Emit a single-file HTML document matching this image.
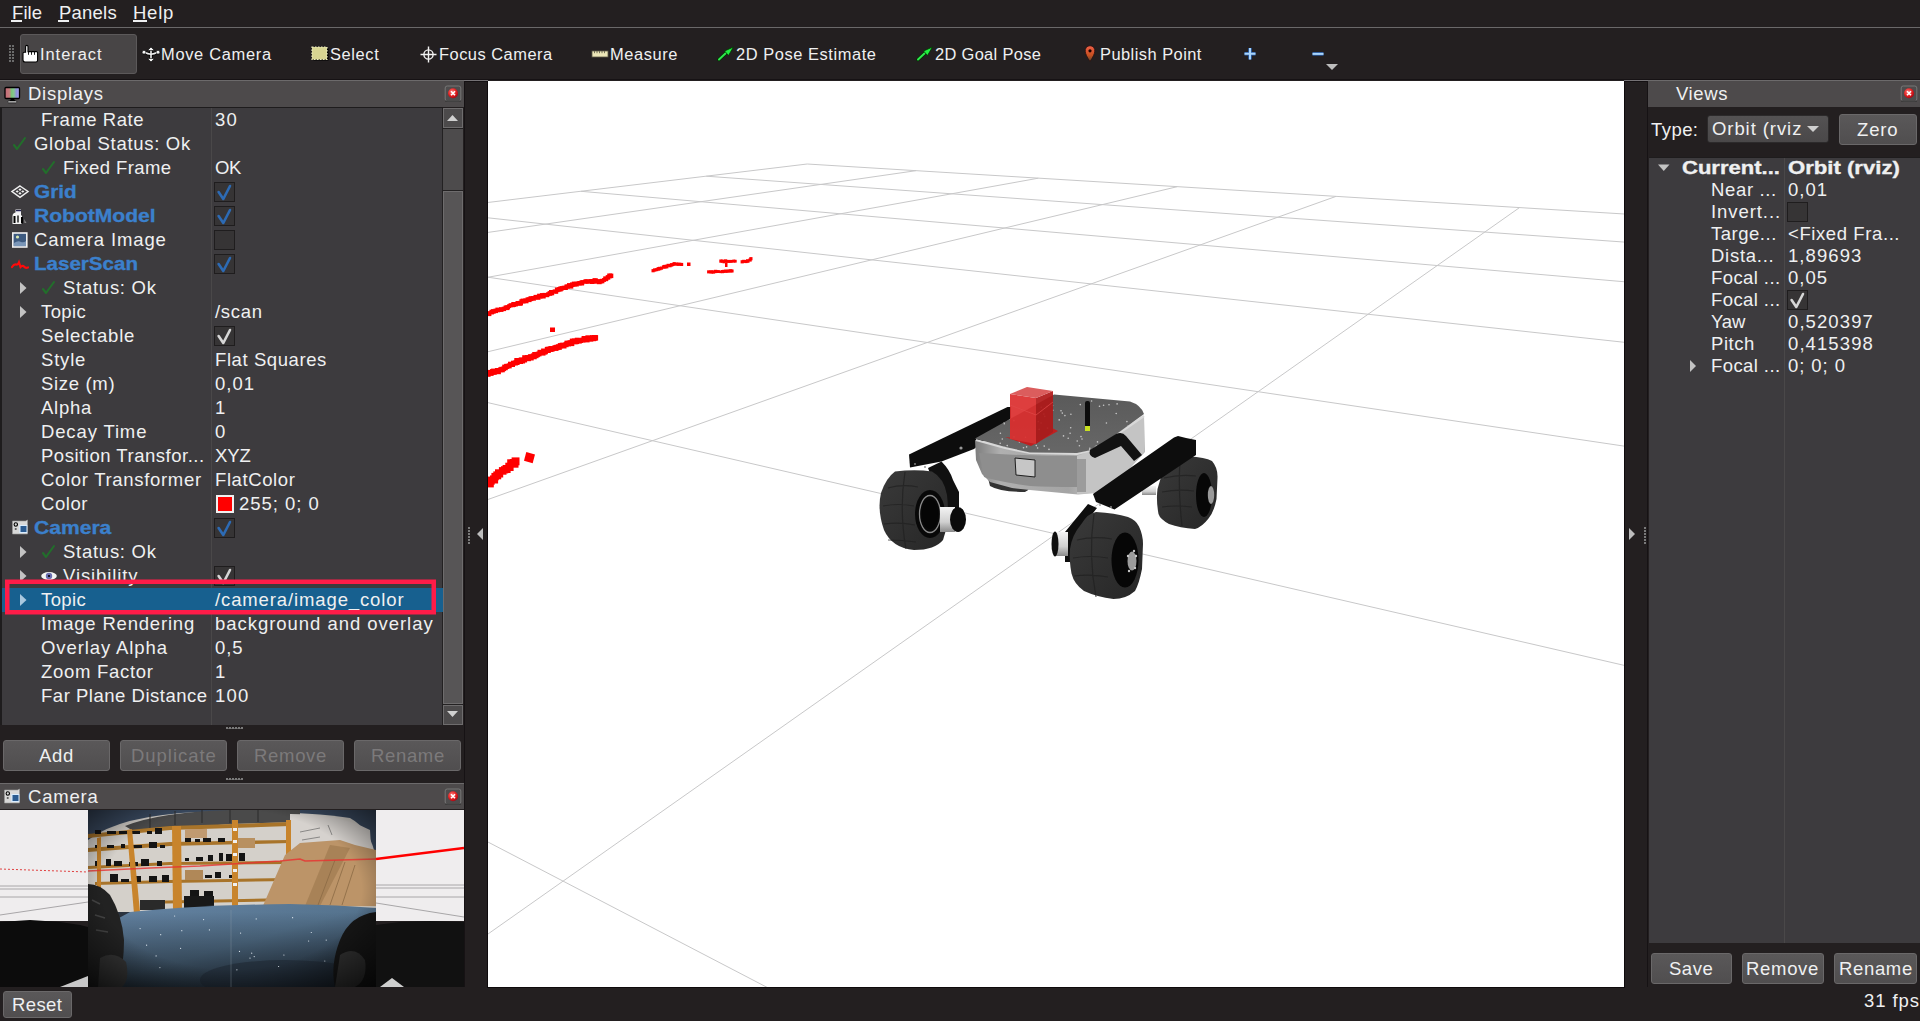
<!DOCTYPE html><html><head><meta charset="utf-8"><style>
html,body{margin:0;padding:0;}
body{width:1920px;height:1021px;position:relative;overflow:hidden;background:#231f20;font-family:"Liberation Sans",sans-serif;}
.t{position:absolute;white-space:pre;line-height:20px;font-family:"Liberation Sans",sans-serif;}
svg{position:absolute;}
</style></head><body>
<div style="position:absolute;left:0px;top:27px;width:1920px;height:1px;background:#6a6869;"></div>
<div class="t" style="left:12px;top:3.0px;color:#eff0f1;font-size:18.5px;letter-spacing:0.079px;">File</div>
<div class="t" style="left:59px;top:3.0px;color:#eff0f1;font-size:18.5px;letter-spacing:0.229px;">Panels</div>
<div class="t" style="left:133px;top:3.0px;color:#eff0f1;font-size:18.5px;letter-spacing:0.746px;">Help</div>
<div style="position:absolute;left:11px;top:20px;width:11px;height:1.5px;background:#eff0f1;"></div>
<div style="position:absolute;left:58px;top:20px;width:11px;height:1.5px;background:#eff0f1;"></div>
<div style="position:absolute;left:133px;top:20px;width:14px;height:1.5px;background:#eff0f1;"></div>
<div style="position:absolute;left:20px;top:34px;width:117px;height:40px;background:#484546;box-sizing:border-box;border:1px solid #5c595a;border-radius:3px;"></div>
<div style="position:absolute;left:9px;top:45px;width:2px;height:2px;background:#6b6b6b;"></div>
<div style="position:absolute;left:12px;top:45px;width:2px;height:2px;background:#6b6b6b;"></div>
<div style="position:absolute;left:9px;top:48px;width:2px;height:2px;background:#6b6b6b;"></div>
<div style="position:absolute;left:12px;top:48px;width:2px;height:2px;background:#6b6b6b;"></div>
<div style="position:absolute;left:9px;top:51px;width:2px;height:2px;background:#6b6b6b;"></div>
<div style="position:absolute;left:12px;top:51px;width:2px;height:2px;background:#6b6b6b;"></div>
<div style="position:absolute;left:9px;top:54px;width:2px;height:2px;background:#6b6b6b;"></div>
<div style="position:absolute;left:12px;top:54px;width:2px;height:2px;background:#6b6b6b;"></div>
<div style="position:absolute;left:9px;top:57px;width:2px;height:2px;background:#6b6b6b;"></div>
<div style="position:absolute;left:12px;top:57px;width:2px;height:2px;background:#6b6b6b;"></div>
<div style="position:absolute;left:9px;top:60px;width:2px;height:2px;background:#6b6b6b;"></div>
<div style="position:absolute;left:12px;top:60px;width:2px;height:2px;background:#6b6b6b;"></div>
<div class="t" style="left:40px;top:44.3px;color:#eff0f1;font-size:16.444444444444443px;letter-spacing:0.952px;">Interact</div>
<div class="t" style="left:161px;top:44.3px;color:#eff0f1;font-size:16.444444444444443px;letter-spacing:0.688px;">Move Camera</div>
<div class="t" style="left:330px;top:44.3px;color:#eff0f1;font-size:16.444444444444443px;letter-spacing:0.612px;">Select</div>
<div class="t" style="left:439px;top:44.3px;color:#eff0f1;font-size:16.444444444444443px;letter-spacing:0.483px;">Focus Camera</div>
<div class="t" style="left:610px;top:44.3px;color:#eff0f1;font-size:16.444444444444443px;letter-spacing:0.580px;">Measure</div>
<div class="t" style="left:736px;top:44.3px;color:#eff0f1;font-size:16.444444444444443px;letter-spacing:0.556px;">2D Pose Estimate</div>
<div class="t" style="left:935px;top:44.3px;color:#eff0f1;font-size:16.444444444444443px;letter-spacing:0.323px;">2D Goal Pose</div>
<div class="t" style="left:1100px;top:44.3px;color:#eff0f1;font-size:16.444444444444443px;letter-spacing:0.457px;">Publish Point</div>
<div style="position:absolute;left:0px;top:80px;width:464px;height:27px;background:#4d4a4b;box-sizing:border-box;border-top:1px solid #6c6a6b;"></div>
<div class="t" style="left:28px;top:84.0px;color:#eff0f1;font-size:18.5px;letter-spacing:0.726px;">Displays</div>
<div style="position:absolute;left:0px;top:107px;width:443px;height:618px;background:#3d3b3e;box-sizing:border-box;border-left:2px solid #1e1c1d;border-top:1px solid #1e1c1d;"></div>
<div style="position:absolute;left:211px;top:108px;width:1px;height:617px;background:#4a4849;"></div>
<div style="position:absolute;left:442px;top:108px;width:21px;height:617px;background:#232122;"></div>
<div style="position:absolute;left:443px;top:129px;width:20px;height:61px;background:#4d4b4c;"></div>
<div style="position:absolute;left:443px;top:191px;width:20px;height:513px;background:#575556;box-sizing:border-box;border:1px solid #6e6c6d;"></div>
<div style="position:absolute;left:443px;top:108px;width:20px;height:20px;background:#4c4a4b;box-sizing:border-box;border:1px solid #6e6c6d;"></div>
<div style="position:absolute;left:443px;top:705px;width:20px;height:20px;background:#4c4a4b;box-sizing:border-box;border:1px solid #6e6c6d;"></div>
<div class="t" style="left:41px;top:110.0px;color:#eff0f1;font-size:18.5px;letter-spacing:0.543px;">Frame Rate</div>
<div class="t" style="left:215px;top:110.0px;color:#eff0f1;font-size:18.5px;letter-spacing:1.165px;">30</div>
<div class="t" style="left:34px;top:134.0px;color:#eff0f1;font-size:18.5px;letter-spacing:0.700px;">Global Status: Ok</div>
<div class="t" style="left:63px;top:158.0px;color:#eff0f1;font-size:18.5px;letter-spacing:0.423px;">Fixed Frame</div>
<div class="t" style="left:215px;top:158.0px;color:#eff0f1;font-size:18.5px;letter-spacing:-0.380px;">OK</div>
<div class="t" style="left:34px;top:182.0px;color:#3b80cc;font-size:18.5px;font-weight:bold;transform:scaleX(1.1233);transform-origin:0 0;-webkit-text-stroke:.35px #3b80cc;">Grid</div>
<div style="position:absolute;left:214px;top:182px;width:21px;height:20px;background:#363435;box-sizing:border-box;border:1px solid #1f1d1e;"></div>
<div class="t" style="left:34px;top:206.0px;color:#3b80cc;font-size:18.5px;font-weight:bold;transform:scaleX(1.1381);transform-origin:0 0;-webkit-text-stroke:.35px #3b80cc;">RobotModel</div>
<div style="position:absolute;left:214px;top:206px;width:21px;height:20px;background:#363435;box-sizing:border-box;border:1px solid #1f1d1e;"></div>
<div class="t" style="left:34px;top:230.0px;color:#eff0f1;font-size:18.5px;letter-spacing:0.866px;">Camera Image</div>
<div style="position:absolute;left:214px;top:230px;width:21px;height:20px;background:#363435;box-sizing:border-box;border:1px solid #1f1d1e;"></div>
<div class="t" style="left:34px;top:254.0px;color:#3b80cc;font-size:18.5px;font-weight:bold;transform:scaleX(1.1114);transform-origin:0 0;-webkit-text-stroke:.35px #3b80cc;">LaserScan</div>
<div style="position:absolute;left:214px;top:254px;width:21px;height:20px;background:#363435;box-sizing:border-box;border:1px solid #1f1d1e;"></div>
<div class="t" style="left:63px;top:278.0px;color:#eff0f1;font-size:18.5px;letter-spacing:0.737px;">Status: Ok</div>
<div class="t" style="left:41px;top:302.0px;color:#eff0f1;font-size:18.5px;letter-spacing:0.416px;">Topic</div>
<div class="t" style="left:215px;top:302.0px;color:#eff0f1;font-size:18.5px;letter-spacing:0.710px;">/scan</div>
<div class="t" style="left:41px;top:326.0px;color:#eff0f1;font-size:18.5px;letter-spacing:0.767px;">Selectable</div>
<div style="position:absolute;left:214px;top:326px;width:21px;height:20px;background:#363435;box-sizing:border-box;border:1px solid #1f1d1e;"></div>
<div class="t" style="left:41px;top:350.0px;color:#eff0f1;font-size:18.5px;letter-spacing:0.818px;">Style</div>
<div class="t" style="left:215px;top:350.0px;color:#eff0f1;font-size:18.5px;letter-spacing:0.587px;">Flat Squares</div>
<div class="t" style="left:41px;top:374.0px;color:#eff0f1;font-size:18.5px;letter-spacing:0.672px;">Size (m)</div>
<div class="t" style="left:215px;top:374.0px;color:#eff0f1;font-size:18.5px;letter-spacing:1.019px;">0,01</div>
<div class="t" style="left:41px;top:398.0px;color:#eff0f1;font-size:18.5px;letter-spacing:0.772px;">Alpha</div>
<div class="t" style="left:215px;top:398.0px;color:#eff0f1;font-size:18.5px;letter-spacing:1.165px;">1</div>
<div class="t" style="left:41px;top:422.0px;color:#eff0f1;font-size:18.5px;letter-spacing:0.863px;">Decay Time</div>
<div class="t" style="left:215px;top:422.0px;color:#eff0f1;font-size:18.5px;letter-spacing:1.165px;">0</div>
<div class="t" style="left:41px;top:446.0px;color:#eff0f1;font-size:18.5px;letter-spacing:0.523px;">Position Transfor...</div>
<div class="t" style="left:215px;top:446.0px;color:#eff0f1;font-size:18.5px;letter-spacing:-0.108px;">XYZ</div>
<div class="t" style="left:41px;top:470.0px;color:#eff0f1;font-size:18.5px;letter-spacing:0.689px;">Color Transformer</div>
<div class="t" style="left:215px;top:470.0px;color:#eff0f1;font-size:18.5px;letter-spacing:0.601px;">FlatColor</div>
<div class="t" style="left:41px;top:494.0px;color:#eff0f1;font-size:18.5px;letter-spacing:0.559px;">Color</div>
<div style="position:absolute;left:216px;top:495px;width:18px;height:18px;background:#ff0000;box-sizing:border-box;border:2px solid #f0f0f0;"></div>
<div class="t" style="left:239px;top:494.0px;color:#eff0f1;font-size:18.5px;letter-spacing:0.981px;">255; 0; 0</div>
<div class="t" style="left:34px;top:518.0px;color:#3b80cc;font-size:18.5px;font-weight:bold;transform:scaleX(1.1390);transform-origin:0 0;-webkit-text-stroke:.35px #3b80cc;">Camera</div>
<div style="position:absolute;left:214px;top:518px;width:21px;height:20px;background:#363435;box-sizing:border-box;border:1px solid #1f1d1e;"></div>
<div class="t" style="left:63px;top:542.0px;color:#eff0f1;font-size:18.5px;letter-spacing:0.737px;">Status: Ok</div>
<div class="t" style="left:63px;top:566.0px;color:#eff0f1;font-size:18.5px;letter-spacing:0.895px;">Visibility</div>
<div style="position:absolute;left:214px;top:566px;width:21px;height:20px;background:#363435;box-sizing:border-box;border:1px solid #1f1d1e;"></div>
<div style="position:absolute;left:2px;top:588px;width:441px;height:24px;background:#17608f;"></div>
<div class="t" style="left:41px;top:590.0px;color:#eff0f1;font-size:18.5px;letter-spacing:0.416px;">Topic</div>
<div class="t" style="left:215px;top:590.0px;color:#eff0f1;font-size:18.5px;letter-spacing:0.882px;">/camera/image_color</div>
<div class="t" style="left:41px;top:614.0px;color:#eff0f1;font-size:18.5px;letter-spacing:0.806px;">Image Rendering</div>
<div class="t" style="left:215px;top:614.0px;color:#eff0f1;font-size:18.5px;letter-spacing:0.961px;">background and overlay</div>
<div class="t" style="left:41px;top:638.0px;color:#eff0f1;font-size:18.5px;letter-spacing:0.902px;">Overlay Alpha</div>
<div class="t" style="left:215px;top:638.0px;color:#eff0f1;font-size:18.5px;letter-spacing:0.970px;">0,5</div>
<div class="t" style="left:41px;top:662.0px;color:#eff0f1;font-size:18.5px;letter-spacing:0.715px;">Zoom Factor</div>
<div class="t" style="left:215px;top:662.0px;color:#eff0f1;font-size:18.5px;letter-spacing:1.165px;">1</div>
<div class="t" style="left:41px;top:686.0px;color:#eff0f1;font-size:18.5px;letter-spacing:0.519px;">Far Plane Distance</div>
<div class="t" style="left:215px;top:686.0px;color:#eff0f1;font-size:18.5px;letter-spacing:1.165px;">100</div>
<div style="position:absolute;left:226px;top:728px;width:16px;height:1px;background:#6b6b6b;opacity:.8"></div>
<div style="position:absolute;left:3px;top:740px;width:107px;height:31px;background:linear-gradient(#5a5859,#504e4f);box-sizing:border-box;border:1px solid #6a6869;border-radius:3px;"></div>
<div class="t" style="left:39px;top:746.0px;color:#eff0f1;font-size:18.5px;letter-spacing:0.643px;">Add</div>
<div style="position:absolute;left:120px;top:740px;width:107px;height:31px;background:linear-gradient(#5a5859,#504e4f);box-sizing:border-box;border:1px solid #6a6869;border-radius:3px;"></div>
<div class="t" style="left:131px;top:746.0px;color:#7c7a7b;font-size:18.5px;letter-spacing:0.959px;">Duplicate</div>
<div style="position:absolute;left:237px;top:740px;width:107px;height:31px;background:linear-gradient(#5a5859,#504e4f);box-sizing:border-box;border:1px solid #6a6869;border-radius:3px;"></div>
<div class="t" style="left:254px;top:746.0px;color:#7c7a7b;font-size:18.5px;letter-spacing:0.694px;">Remove</div>
<div style="position:absolute;left:354px;top:740px;width:107px;height:31px;background:linear-gradient(#5a5859,#504e4f);box-sizing:border-box;border:1px solid #6a6869;border-radius:3px;"></div>
<div class="t" style="left:371px;top:746.0px;color:#7c7a7b;font-size:18.5px;letter-spacing:0.649px;">Rename</div>
<div style="position:absolute;left:226px;top:779px;width:16px;height:1px;background:#6b6b6b;opacity:.8"></div>
<div style="position:absolute;left:0px;top:783px;width:464px;height:26px;background:#4d4a4b;box-sizing:border-box;border-top:1px solid #6c6a6b;"></div>
<div class="t" style="left:28px;top:787.0px;color:#eff0f1;font-size:18.5px;letter-spacing:0.808px;">Camera</div>
<svg style="left:0;top:810px" width="464" height="177" viewBox="0 810 464 177">
<defs>
<linearGradient id="floor" x1="0" y1="0" x2="1" y2="1"><stop offset="0" stop-color="#6584a4"/><stop offset=".5" stop-color="#56748f"/><stop offset="1" stop-color="#2a3848"/></linearGradient>
<radialGradient id="vig" cx=".5" cy=".45" r=".75"><stop offset=".6" stop-color="#000" stop-opacity="0"/><stop offset="1" stop-color="#000" stop-opacity=".75"/></radialGradient>
<linearGradient id="floorshade" x1="0" y1="0" x2="0" y2="1"><stop offset="0" stop-color="#000" stop-opacity="0"/><stop offset="1" stop-color="#000" stop-opacity=".55"/></linearGradient>
</defs>
<rect x="0" y="810" width="88" height="111" fill="#efedee"/>
<rect x="376" y="810" width="88" height="111" fill="#efedee"/>
<g stroke="#a8a6a8" stroke-width="1" fill="none"><path d="M0,886 H88 M0,889 H88 M0,897 H88 M0,915 L88,902"/><path d="M376,885 H464 M376,888 H464 M376,897 H464 M376,903 L464,917"/></g>
<path d="M0,869 L88,872" stroke="#e04040" stroke-width="1" stroke-dasharray="2 2"/>
<path d="M0,922 L30,920 L60,922 L80,925 L88,927 V987 H0 Z" fill="#0c0c0c"/>
<path d="M60,987 L88,976 V987 Z" fill="#c8c8c8"/>
<path d="M376,925 L400,922 L430,921 L464,922 V987 H376 Z" fill="#111111"/>
<path d="M380,987 L392,978 L404,987 Z" fill="#cfcfcf"/>
<rect x="88" y="810" width="288" height="177" fill="#2c3440"/>
<path d="M88,810 H376 V860 H88 Z" fill="#3a4a60"/>
<path d="M88,840 Q120,815 200,812 Q300,810 350,818 Q372,830 376,860 V912 H88 Z" fill="#d4d0ca"/>
<path d="M125,826 Q160,812 230,810 L300,810 L300,822 L230,824 L135,832 Z" fill="#4a4a4a"/>
<g stroke="#2a2a2a" stroke-width="1"><path d="M150,814 v14 M175,811 v14 M202,810 v13 M230,810 v13 M258,810 v12"/></g>
<path d="M290,814 Q340,814 370,830 L372,862 L290,858 Z" fill="#d6d2ce"/>
<g stroke="#555" stroke-width=".6" fill="none"><path d="M300,832 l20,-4 M302,840 l18,-3 M305,846 l14,-2 M328,825 l4,10"/></g>
<rect x="325" y="843" width="3" height="5" fill="#e8c020"/>
<g fill="#a8742a"><path d="M88,834 L170,826 L290,822 L290,826 L170,830 L88,838 Z"/><path d="M88,848 L170,842 L290,840 L290,843 L170,846 L88,852 Z"/><path d="M88,866 L170,862 L290,861 L290,864 L170,865 L88,869 Z"/><path d="M95,882 L170,880 L290,878 L290,881 L170,883 L95,885 Z"/><path d="M140,901 L290,898 L290,901 L140,904 Z"/></g>
<rect x="95" y="830" width="6" height="4" fill="#141414"/><rect x="107" y="831" width="9" height="3" fill="#141414"/><rect x="119" y="831" width="8" height="3" fill="#141414"/><rect x="132" y="831" width="8" height="3" fill="#141414"/><rect x="147" y="831" width="5" height="3" fill="#141414"/><rect x="155" y="828" width="7" height="6" fill="#141414"/><rect x="95" y="845" width="5" height="3" fill="#141414"/><rect x="107" y="845" width="7" height="3" fill="#141414"/><rect x="121" y="844" width="4" height="4" fill="#141414"/><rect x="133" y="845" width="9" height="3" fill="#141414"/><rect x="149" y="842" width="8" height="6" fill="#141414"/><rect x="160" y="845" width="5" height="3" fill="#141414"/><rect x="95" y="861" width="5" height="5" fill="#141414"/><rect x="106" y="859" width="5" height="7" fill="#141414"/><rect x="114" y="861" width="8" height="5" fill="#141414"/><rect x="129" y="862" width="9" height="4" fill="#141414"/><rect x="141" y="859" width="8" height="7" fill="#141414"/><rect x="157" y="861" width="5" height="5" fill="#141414"/><rect x="110" y="874" width="8" height="8" fill="#141414"/><rect x="121" y="879" width="8" height="3" fill="#141414"/><rect x="136" y="876" width="5" height="6" fill="#141414"/><rect x="149" y="876" width="8" height="6" fill="#141414"/><rect x="162" y="875" width="7" height="7" fill="#141414"/><rect x="185" y="838" width="6" height="4" fill="#141414"/><rect x="195" y="839" width="5" height="3" fill="#141414"/><rect x="203" y="838" width="8" height="4" fill="#141414"/><rect x="218" y="838" width="7" height="4" fill="#141414"/><rect x="233" y="838" width="7" height="4" fill="#141414"/><rect x="185" y="858" width="4" height="3" fill="#141414"/><rect x="196" y="857" width="7" height="4" fill="#141414"/><rect x="208" y="855" width="5" height="6" fill="#141414"/><rect x="219" y="853" width="4" height="8" fill="#141414"/><rect x="226" y="854" width="8" height="7" fill="#141414"/><rect x="239" y="853" width="6" height="8" fill="#141414"/><rect x="190" y="872" width="8" height="6" fill="#141414"/><rect x="205" y="875" width="7" height="3" fill="#141414"/><rect x="215" y="872" width="6" height="6" fill="#141414"/><rect x="229" y="875" width="9" height="3" fill="#141414"/><rect x="190" y="890" width="9" height="8" fill="#141414"/><rect x="204" y="891" width="9" height="7" fill="#141414"/>
<rect x="185" y="829" width="22" height="9" fill="#c09a70"/><rect x="235" y="838" width="20" height="10" fill="#b89060"/>
<rect x="185" y="870" width="18" height="10" fill="#b08858"/>
<g fill="#c8842c"><path d="M97,838 L101,837 L101,905 L97,905 Z"/><path d="M127,830 L132,829 L140,912 L134,914 Z"/><path d="M172,826 L181,826 L182,910 L173,910 Z"/><path d="M232,820 L238,820 L238,910 L232,910 Z"/><path d="M286,820 L291,820 L291,906 L286,906 Z"/></g>
<g fill="#f0f0f0"><rect x="233" y="828" width="4" height="3"/><rect x="233" y="840" width="4" height="3"/><rect x="233" y="853" width="4" height="3"/><rect x="233" y="869" width="4" height="3"/><rect x="233" y="883" width="4" height="3"/></g>
<rect x="184" y="896" width="30" height="14" fill="#181818"/><rect x="140" y="900" width="25" height="10" fill="#2a2a2a"/>
<path d="M285,855 L300,843 L340,840 L355,845 L376,850 V906 L262,908 Z" fill="#bc9468"/>
<path d="M330,845 L350,848 L320,906 L305,906 Z" fill="#a07a50" opacity=".7"/>
<g stroke="#8a6a44" stroke-width=".8"><path d="M335,860 L318,905 M345,862 L330,905 M355,865 L342,905"/></g>
<path d="M88,871 L150,868 L200,866 L280,861 L300,859 L305,861 L376,859" stroke="#e83030" stroke-width="1.5" fill="none" opacity=".8"/>
<path d="M376,859 L464,848" stroke="#ff0000" stroke-width="2.6" fill="none"/>
<path d="M130,912 Q200,905 290,904 Q340,905 376,908 V987 H88 V935 Z" fill="url(#floor)"/>
<rect x="88" y="912" width="288" height="75" fill="url(#floorshade)"/>
<clipPath id="photoclip"><rect x="88" y="810" width="288" height="177"/></clipPath>
<ellipse cx="285" cy="980" rx="85" ry="20" fill="#1a222c" opacity=".5" clip-path="url(#photoclip)"/>
<g fill="#dfe8f0"><circle cx="239.5" cy="951.4" r=".6"/><circle cx="343.3" cy="945.3" r=".6"/><circle cx="251.7" cy="953.2" r=".6"/><circle cx="180.6" cy="948.3" r=".6"/><circle cx="278.6" cy="966.5" r=".6"/><circle cx="160.7" cy="934.7" r=".6"/><circle cx="159.9" cy="967.6" r=".6"/><circle cx="292.6" cy="917.7" r=".6"/><circle cx="356.1" cy="977.7" r=".6"/><circle cx="283.9" cy="955.0" r=".6"/><circle cx="174.6" cy="916.0" r=".6"/><circle cx="256.2" cy="918.9" r=".6"/><circle cx="181.8" cy="930.7" r=".6"/><circle cx="146.6" cy="945.2" r=".6"/><circle cx="236.9" cy="969.8" r=".6"/><circle cx="254.2" cy="956.6" r=".6"/><circle cx="250.0" cy="958.1" r=".6"/><circle cx="240.6" cy="933.1" r=".6"/><circle cx="359.5" cy="979.7" r=".6"/><circle cx="324.8" cy="961.0" r=".6"/><circle cx="209.4" cy="929.9" r=".6"/><circle cx="203.6" cy="919.6" r=".6"/><circle cx="308.6" cy="941.0" r=".6"/><circle cx="326.2" cy="940.1" r=".6"/><circle cx="350.8" cy="970.1" r=".6"/><circle cx="140.1" cy="928.6" r=".6"/><circle cx="340.3" cy="945.5" r=".6"/><circle cx="355.7" cy="940.8" r=".6"/><circle cx="156.1" cy="955.9" r=".6"/><circle cx="311.3" cy="932.5" r=".6"/></g>
<path d="M88,884 Q100,884 110,895 Q122,915 124,940 Q124,965 118,987 H88 Z" fill="#222222"/>
<path d="M100,958 Q114,950 126,962 Q130,980 122,987 H98 Z" fill="#383838"/>
<path d="M92,900 l8,4 M95,915 l10,3 M96,930 l12,2" stroke="#444" stroke-width="1.5"/>
<path d="M376,912 Q350,915 340,940 Q330,965 335,987 H376 Z" fill="#151515"/>
<path d="M340,955 Q355,945 365,960 Q368,980 355,987 H335 Z" fill="#303030"/>
<rect x="88" y="810" width="288" height="177" fill="url(#vig)"/>
<path d="M231,910 V987" stroke="#9aa8b4" stroke-width=".6" opacity=".5"/>
</svg>
<div style="position:absolute;left:3px;top:991px;width:69px;height:27px;background:linear-gradient(#5a5859,#504e4f);box-sizing:border-box;border:1px solid #6a6869;border-radius:3px;"></div>
<div class="t" style="left:12px;top:995.0px;color:#eff0f1;font-size:18.5px;letter-spacing:0.391px;">Reset</div>
<svg style="left:488px;top:81px" width="1136" height="906" viewBox="488 81 1136 906">
<rect x="488" y="81" width="1136" height="906" fill="#ffffff"/>
<g stroke="#c8c8c9" stroke-width="1" fill="none">
<line x1="807.2" y1="164.0" x2="1626.0" y2="214.1"/>
<line x1="807.2" y1="164.0" x2="486.0" y2="202.7"/>
<line x1="706.3" y1="176.2" x2="1626.0" y2="242.2"/>
<line x1="915.9" y1="170.7" x2="486.0" y2="232.7"/>
<line x1="581.0" y1="191.3" x2="1626.0" y2="281.9"/>
<line x1="1038.3" y1="178.2" x2="486.0" y2="277.6"/>
<line x1="486.0" y1="217.6" x2="1626.0" y2="342.5"/>
<line x1="1177.2" y1="186.7" x2="486.0" y2="352.2"/>
<line x1="486.0" y1="276.9" x2="1626.0" y2="446.4"/>
<line x1="1336.0" y1="196.4" x2="486.0" y2="500.2"/>
<line x1="486.0" y1="402.2" x2="1626.0" y2="665.8"/>
<line x1="1519.5" y1="207.6" x2="486.0" y2="935.4"/>
<line x1="486.0" y1="841.0" x2="770.2" y2="989.0"/>
</g>
<g fill="#ff0000"><rect x="486.2" y="311.2" width="4.1" height="4.1"/><rect x="486.8" y="311.5" width="4.6" height="4.6"/><rect x="489.6" y="310.1" width="4.3" height="4.3"/><rect x="489.7" y="309.7" width="4.4" height="4.4"/><rect x="491.1" y="309.1" width="4.6" height="4.6"/><rect x="493.5" y="308.6" width="4.5" height="4.5"/><rect x="495.4" y="307.6" width="4.7" height="4.7"/><rect x="497.1" y="308.0" width="4.0" height="4.0"/><rect x="499.1" y="307.4" width="3.9" height="3.9"/><rect x="499.0" y="307.4" width="4.5" height="4.5"/><rect x="501.7" y="306.7" width="4.4" height="4.4"/><rect x="503.5" y="305.6" width="4.4" height="4.4"/><rect x="504.6" y="305.3" width="4.8" height="4.8"/><rect x="506.2" y="305.3" width="3.9" height="3.9"/><rect x="507.2" y="304.1" width="3.9" height="3.9"/><rect x="508.6" y="303.2" width="4.1" height="4.1"/><rect x="510.8" y="303.0" width="4.2" height="4.2"/><rect x="511.3" y="302.0" width="4.9" height="4.9"/><rect x="514.0" y="302.4" width="4.0" height="4.0"/><rect x="515.5" y="301.0" width="4.3" height="4.3"/><rect x="517.4" y="301.2" width="4.5" height="4.5"/><rect x="518.3" y="300.8" width="4.7" height="4.7"/><rect x="519.4" y="299.2" width="4.2" height="4.2"/><rect x="520.6" y="298.6" width="4.9" height="4.9"/><rect x="523.3" y="298.4" width="4.6" height="4.6"/><rect x="524.2" y="299.0" width="4.3" height="4.3"/><rect x="525.5" y="297.4" width="4.5" height="4.5"/><rect x="526.8" y="297.3" width="4.8" height="4.8"/><rect x="528.5" y="296.2" width="4.9" height="4.9"/><rect x="530.7" y="296.1" width="3.9" height="3.9"/><rect x="531.2" y="296.0" width="4.7" height="4.7"/><rect x="533.5" y="294.9" width="4.3" height="4.3"/><rect x="535.6" y="294.9" width="4.9" height="4.9"/><rect x="537.1" y="293.7" width="4.6" height="4.6"/><rect x="538.6" y="294.3" width="4.1" height="4.1"/><rect x="539.9" y="293.1" width="4.3" height="4.3"/><rect x="540.9" y="293.7" width="4.8" height="4.8"/><rect x="542.5" y="292.9" width="4.0" height="4.0"/><rect x="545.0" y="293.0" width="4.2" height="4.2"/><rect x="546.2" y="292.2" width="4.0" height="4.0"/><rect x="547.6" y="291.1" width="4.7" height="4.7"/><rect x="549.0" y="290.0" width="4.2" height="4.2"/><rect x="549.4" y="290.5" width="4.8" height="4.8"/><rect x="552.7" y="289.4" width="3.9" height="3.9"/><rect x="554.3" y="289.9" width="3.9" height="3.9"/><rect x="554.9" y="287.5" width="4.7" height="4.7"/><rect x="557.0" y="287.2" width="4.4" height="4.4"/><rect x="558.0" y="286.6" width="4.8" height="4.8"/><rect x="559.5" y="286.1" width="4.4" height="4.4"/><rect x="561.7" y="285.7" width="4.2" height="4.2"/><rect x="563.6" y="285.7" width="4.3" height="4.3"/><rect x="564.5" y="284.4" width="4.1" height="4.1"/><rect x="565.7" y="284.6" width="4.1" height="4.1"/><rect x="567.0" y="283.1" width="4.5" height="4.5"/><rect x="568.5" y="283.8" width="4.8" height="4.8"/><rect x="570.0" y="282.4" width="4.6" height="4.6"/><rect x="571.8" y="281.6" width="4.9" height="4.9"/><rect x="574.1" y="281.8" width="4.7" height="4.7"/><rect x="576.5" y="281.3" width="3.9" height="3.9"/><rect x="577.4" y="281.0" width="4.4" height="4.4"/><rect x="579.2" y="280.6" width="4.9" height="4.9"/><rect x="580.3" y="280.1" width="4.2" height="4.2"/><rect x="583.2" y="279.5" width="4.0" height="4.0"/><rect x="584.2" y="279.3" width="4.1" height="4.1"/><rect x="585.4" y="279.5" width="4.3" height="4.3"/><rect x="588.3" y="279.1" width="3.9" height="3.9"/><rect x="589.6" y="279.1" width="4.9" height="4.9"/><rect x="591.6" y="279.6" width="4.0" height="4.0"/><rect x="592.3" y="278.4" width="4.3" height="4.3"/><rect x="593.0" y="278.3" width="4.9" height="4.9"/><rect x="595.2" y="279.3" width="4.3" height="4.3"/><rect x="596.8" y="279.3" width="4.9" height="4.9"/><rect x="599.1" y="279.3" width="4.0" height="4.0"/><rect x="599.9" y="278.8" width="4.5" height="4.5"/><rect x="602.1" y="278.0" width="3.9" height="3.9"/><rect x="603.2" y="276.4" width="4.8" height="4.8"/><rect x="604.5" y="276.8" width="3.9" height="3.9"/><rect x="605.7" y="275.1" width="4.6" height="4.6"/><rect x="607.2" y="273.5" width="4.8" height="4.8"/><rect x="608.8" y="273.6" width="4.5" height="4.5"/><rect x="485.2" y="371.4" width="5.4" height="5.4"/><rect x="487.6" y="370.1" width="5.7" height="5.7"/><rect x="488.2" y="369.9" width="5.6" height="5.6"/><rect x="490.0" y="369.1" width="5.7" height="5.7"/><rect x="491.1" y="368.6" width="6.0" height="6.0"/><rect x="494.9" y="368.0" width="5.0" height="5.0"/><rect x="495.0" y="368.3" width="5.9" height="5.9"/><rect x="498.2" y="367.3" width="4.9" height="4.9"/><rect x="499.3" y="366.8" width="5.5" height="5.5"/><rect x="501.4" y="366.4" width="4.7" height="4.7"/><rect x="502.2" y="364.6" width="5.6" height="5.6"/><rect x="504.3" y="364.0" width="4.8" height="4.8"/><rect x="504.3" y="363.8" width="5.0" height="5.0"/><rect x="506.7" y="363.4" width="5.0" height="5.0"/><rect x="508.0" y="361.7" width="5.3" height="5.3"/><rect x="510.2" y="362.2" width="4.8" height="4.8"/><rect x="511.0" y="360.7" width="4.7" height="4.7"/><rect x="512.9" y="360.5" width="5.0" height="5.0"/><rect x="514.3" y="359.7" width="5.3" height="5.3"/><rect x="514.3" y="358.0" width="5.9" height="5.9"/><rect x="517.2" y="358.2" width="5.8" height="5.8"/><rect x="518.7" y="357.5" width="4.9" height="4.9"/><rect x="519.3" y="357.7" width="5.8" height="5.8"/><rect x="522.1" y="357.5" width="5.0" height="5.0"/><rect x="522.2" y="355.2" width="5.7" height="5.7"/><rect x="524.9" y="355.3" width="5.5" height="5.5"/><rect x="525.0" y="355.3" width="5.9" height="5.9"/><rect x="527.8" y="354.6" width="5.9" height="5.9"/><rect x="528.2" y="354.2" width="5.1" height="5.1"/><rect x="530.8" y="353.4" width="5.9" height="5.9"/><rect x="532.3" y="352.0" width="5.8" height="5.8"/><rect x="532.6" y="352.3" width="5.9" height="5.9"/><rect x="534.6" y="351.9" width="5.3" height="5.3"/><rect x="536.5" y="351.4" width="5.0" height="5.0"/><rect x="537.5" y="349.8" width="5.1" height="5.1"/><rect x="540.4" y="350.5" width="5.1" height="5.1"/><rect x="541.1" y="348.5" width="6.0" height="6.0"/><rect x="543.1" y="349.4" width="4.8" height="4.8"/><rect x="544.8" y="347.0" width="6.0" height="6.0"/><rect x="545.5" y="346.7" width="5.3" height="5.3"/><rect x="547.7" y="346.4" width="5.5" height="5.5"/><rect x="548.9" y="346.1" width="5.5" height="5.5"/><rect x="550.4" y="346.5" width="4.7" height="4.7"/><rect x="552.5" y="345.2" width="5.7" height="5.7"/><rect x="554.0" y="345.2" width="5.2" height="5.2"/><rect x="554.5" y="344.7" width="5.1" height="5.1"/><rect x="556.1" y="344.2" width="5.7" height="5.7"/><rect x="557.8" y="343.1" width="5.2" height="5.2"/><rect x="559.7" y="342.7" width="4.9" height="4.9"/><rect x="560.9" y="342.9" width="5.6" height="5.6"/><rect x="563.5" y="342.1" width="5.1" height="5.1"/><rect x="564.4" y="340.7" width="5.1" height="5.1"/><rect x="565.5" y="340.8" width="5.6" height="5.6"/><rect x="567.4" y="340.4" width="5.0" height="5.0"/><rect x="568.5" y="340.3" width="5.8" height="5.8"/><rect x="569.8" y="338.6" width="5.4" height="5.4"/><rect x="571.9" y="338.5" width="5.8" height="5.8"/><rect x="574.1" y="339.1" width="5.0" height="5.0"/><rect x="574.8" y="337.7" width="5.0" height="5.0"/><rect x="577.0" y="338.8" width="4.8" height="4.8"/><rect x="578.4" y="338.1" width="4.9" height="4.9"/><rect x="580.4" y="337.5" width="5.0" height="5.0"/><rect x="581.6" y="336.0" width="5.7" height="5.7"/><rect x="583.6" y="336.1" width="5.3" height="5.3"/><rect x="584.2" y="337.0" width="5.4" height="5.4"/><rect x="585.4" y="335.3" width="5.8" height="5.8"/><rect x="587.7" y="336.0" width="5.6" height="5.6"/><rect x="590.0" y="335.2" width="6.0" height="6.0"/><rect x="591.6" y="335.0" width="5.7" height="5.7"/><rect x="592.7" y="335.1" width="5.4" height="5.4"/><rect x="486.1" y="479.7" width="7.7" height="7.7"/><rect x="486.6" y="476.6" width="8.1" height="8.1"/><rect x="490.0" y="475.4" width="8.1" height="8.1"/><rect x="491.4" y="472.9" width="7.4" height="7.4"/><rect x="493.3" y="471.4" width="7.9" height="7.9"/><rect x="495.0" y="469.3" width="8.2" height="8.2"/><rect x="498.9" y="467.1" width="7.6" height="7.6"/><rect x="501.0" y="466.2" width="7.2" height="7.2"/><rect x="502.6" y="465.0" width="8.0" height="8.0"/><rect x="505.3" y="462.7" width="8.3" height="8.3"/><rect x="507.2" y="459.3" width="7.5" height="7.5"/><rect x="509.8" y="459.0" width="8.7" height="8.7"/><rect x="511.6" y="457.4" width="7.9" height="7.9"/><rect x="651.5" y="269.1" width="3.2" height="3.2"/><rect x="653.1" y="268.3" width="3.3" height="3.3"/><rect x="655.2" y="268.1" width="3.1" height="3.1"/><rect x="656.6" y="267.1" width="3.5" height="3.5"/><rect x="658.0" y="266.8" width="3.5" height="3.5"/><rect x="660.0" y="266.6" width="3.1" height="3.1"/><rect x="661.9" y="265.3" width="3.3" height="3.3"/><rect x="663.0" y="264.9" width="3.6" height="3.6"/><rect x="664.7" y="264.7" width="3.7" height="3.7"/><rect x="666.5" y="263.8" width="3.0" height="3.0"/><rect x="668.3" y="264.0" width="3.3" height="3.3"/><rect x="669.8" y="263.1" width="3.5" height="3.5"/><rect x="671.7" y="262.9" width="3.1" height="3.1"/><rect x="672.6" y="262.1" width="3.1" height="3.1"/><rect x="674.9" y="262.5" width="3.2" height="3.2"/><rect x="676.6" y="262.7" width="3.1" height="3.1"/><rect x="678.2" y="262.7" width="3.1" height="3.1"/><rect x="680.1" y="262.9" width="3.1" height="3.1"/><rect x="707.1" y="270.3" width="3.1" height="3.1"/><rect x="709.4" y="270.3" width="3.1" height="3.1"/><rect x="710.4" y="270.5" width="3.0" height="3.0"/><rect x="712.0" y="270.4" width="3.2" height="3.2"/><rect x="713.9" y="269.8" width="3.3" height="3.3"/><rect x="715.9" y="270.1" width="2.9" height="2.9"/><rect x="717.2" y="270.2" width="2.8" height="2.8"/><rect x="719.3" y="270.5" width="2.6" height="2.6"/><rect x="720.8" y="270.0" width="3.2" height="3.2"/><rect x="722.3" y="269.8" width="3.1" height="3.1"/><rect x="724.2" y="269.6" width="3.2" height="3.2"/><rect x="725.7" y="269.8" width="2.9" height="2.9"/><rect x="727.4" y="269.4" width="3.2" height="3.2"/><rect x="729.2" y="269.2" width="3.2" height="3.2"/><rect x="730.6" y="269.5" width="3.0" height="3.0"/><rect x="719.3" y="259.5" width="3.2" height="3.2"/><rect x="720.8" y="259.6" width="3.1" height="3.1"/><rect x="722.5" y="260.2" width="3.1" height="3.1"/><rect x="724.0" y="259.3" width="3.3" height="3.3"/><rect x="725.6" y="260.0" width="2.9" height="2.9"/><rect x="727.7" y="259.9" width="3.0" height="3.0"/><rect x="729.3" y="260.1" width="2.6" height="2.6"/><rect x="730.6" y="259.9" width="2.8" height="2.8"/><rect x="732.4" y="259.6" width="2.9" height="2.9"/><rect x="733.9" y="259.8" width="2.8" height="2.8"/><rect x="740.6" y="260.2" width="3.2" height="3.2"/><rect x="742.1" y="259.8" width="3.1" height="3.1"/><rect x="744.5" y="260.0" width="3.1" height="3.1"/><rect x="745.9" y="259.2" width="3.6" height="3.6"/><rect x="748.5" y="258.4" width="3.2" height="3.2"/><rect x="749.3" y="257.1" width="3.2" height="3.2"/><rect x="550" y="327.5" width="5" height="4.5"/><rect x="687" y="262.5" width="3.5" height="3.5"/><rect x="725" y="263" width="2.5" height="4"/><rect x="525" y="453" width="9" height="9" transform="rotate(15 529 457.5)"/></g>
<defs>
<linearGradient id="tire" x1="0" y1="0" x2="1" y2="1"><stop offset="0" stop-color="#3a3a3a"/><stop offset="1" stop-color="#262626"/></linearGradient>
<linearGradient id="body" x1="0" y1="0" x2="1" y2="0"><stop offset="0" stop-color="#7d7d7d"/><stop offset=".15" stop-color="#b0b0b0"/><stop offset=".55" stop-color="#a4a4a4"/><stop offset=".7" stop-color="#c2c2c2"/><stop offset="1" stop-color="#b8b8b8"/></linearGradient>
<linearGradient id="motor" x1="0" y1="0" x2="0" y2="1"><stop offset="0" stop-color="#f4f4f4"/><stop offset=".6" stop-color="#d0d0d0"/><stop offset="1" stop-color="#8a8a8a"/></linearGradient>
<linearGradient id="plate" x1="0" y1="0" x2="0" y2="1"><stop offset="0" stop-color="#5a5a5a"/><stop offset="1" stop-color="#676767"/></linearGradient>
</defs>
<path d="M1162.5,472 Q1172,458 1189,456.5 Q1205,457 1212,461 Q1218,468 1217.5,478 L1216.5,499 Q1214,512 1208.5,518.5 Q1202,527 1195,529 Q1180,528 1169,524 Q1160,519 1158.5,514 Q1156,500 1157.5,489 Z" fill="url(#tire)"/>
<path d="M1164,478 Q1180,474 1196,476 M1162,492 Q1178,489 1194,491 M1162,507 Q1176,505 1192,507 M1180,462 Q1178,490 1182,526" stroke="#202020" stroke-width="1.2" fill="none" opacity=".7"/>
<ellipse cx="1204" cy="495" rx="8" ry="22" fill="#070707"/>
<ellipse cx="1211" cy="495" rx="3.2" ry="9" fill="#9a9a9a"/>
<rect x="1142" y="486" width="14" height="9" fill="url(#motor)"/>
<path d="M909,454.5 L1007.5,407 L1011,407 L1011,418 L974,449 L941.5,461.5 L910,467.5 Z" fill="#0d0d0d"/>
<circle cx="961" cy="448" r="1.6" fill="#9a9a9a"/><circle cx="915" cy="464" r=".9" fill="#888"/><circle cx="925" cy="467" r=".9" fill="#888"/>
<path d="M988,478 Q1000,470 1030,478 Q1034,488 1025,492 Q1000,492 990,486 Z" fill="#333"/>
<path d="M975,440 L976,460 L982,474 L990,482 L1012,488 L1030,490 L1078,494.5 L1108,492 L1145,452 L1144,416 L1096,449 L1077,454 L1030,453 L1005,448 Z" fill="url(#body)"/>
<path d="M979,453 Q1030,456 1077,456 L1077,487 Q1050,487 1030,486 Q1000,482 984,477 Z" fill="#8e8e8e"/>
<path d="M1077,456 L1096,449 L1144,417 L1144,452 L1108,492 L1077,494 Z" fill="#c4c4c4"/>
<rect x="1077" y="459" width="9" height="33" fill="#9c9c9c"/>
<path d="M1015,458 L1035,460 L1035,477 L1016,475 Z" fill="#c6c6c6" stroke="#1e1e1e" stroke-width="1"/>
<path d="M976,440 L1005,448 L1030,453 L1077,454 L1096,449 L1144,416" stroke="#d8d8d8" stroke-width="2.2" fill="none"/>
<path d="M975,438.5 L1054,394.5 L1130,401.5 Q1141,405 1144,414 L1096,449 L1077,453 L1030,452.5 L1005,447 Z" fill="url(#plate)"/>
<clipPath id="pl"><path d="M975,438.5 L1054,394.5 L1130,401.5 Q1141,405 1144,414 L1096,449 L1077,453 L1030,452.5 L1005,447 Z"/></clipPath>
<g fill="#c8c8c8" clip-path="url(#pl)"><circle cx="1081.0" cy="436.6" r="0.8"/><circle cx="1103.4" cy="447.0" r="0.8"/><circle cx="1096.2" cy="446.0" r="0.8"/><circle cx="1003.8" cy="422.2" r="0.8"/><circle cx="1122.6" cy="431.7" r="0.8"/><circle cx="1117.1" cy="403.9" r="0.8"/><circle cx="1061.0" cy="410.8" r="0.8"/><circle cx="1070.7" cy="427.8" r="0.8"/><circle cx="1001.7" cy="409.3" r="0.8"/><circle cx="1036.3" cy="445.6" r="0.8"/><circle cx="1099.5" cy="406.3" r="0.8"/><circle cx="1103.6" cy="405.2" r="0.8"/><circle cx="1080.3" cy="404.6" r="0.8"/><circle cx="1000.2" cy="443.3" r="0.8"/><circle cx="1027.2" cy="409.2" r="0.8"/><circle cx="1127.7" cy="443.4" r="0.8"/><circle cx="1037.6" cy="448.0" r="0.8"/><circle cx="1070.1" cy="433.2" r="0.8"/><circle cx="1026.6" cy="446.9" r="0.8"/><circle cx="1089.8" cy="448.3" r="0.8"/><circle cx="1116.2" cy="413.5" r="0.8"/><circle cx="1047.0" cy="406.6" r="0.8"/><circle cx="1018.9" cy="401.4" r="0.8"/><circle cx="1039.2" cy="429.4" r="0.8"/><circle cx="1000.4" cy="433.3" r="0.8"/><circle cx="1043.9" cy="414.1" r="0.8"/><circle cx="1106.4" cy="423.0" r="0.8"/><circle cx="1041.1" cy="423.0" r="0.8"/><circle cx="1091.6" cy="401.0" r="0.8"/><circle cx="1126.8" cy="399.2" r="0.8"/><circle cx="1097.5" cy="441.9" r="0.8"/><circle cx="1002.3" cy="439.0" r="0.8"/><circle cx="1047.6" cy="428.1" r="0.8"/><circle cx="1001.2" cy="400.4" r="0.8"/><circle cx="1023.5" cy="447.7" r="0.8"/><circle cx="1025.5" cy="437.3" r="0.8"/><circle cx="1120.9" cy="447.0" r="0.8"/><circle cx="1044.8" cy="416.4" r="0.8"/><circle cx="1068.2" cy="438.3" r="0.8"/><circle cx="1014.0" cy="436.9" r="0.8"/><circle cx="1103.6" cy="442.7" r="0.8"/><circle cx="1004.8" cy="447.2" r="0.8"/><circle cx="1011.9" cy="415.7" r="0.8"/><circle cx="1079.4" cy="445.7" r="0.8"/><circle cx="1044.2" cy="446.1" r="0.8"/><circle cx="1070.9" cy="414.2" r="0.8"/><circle cx="1041.2" cy="407.2" r="0.8"/><circle cx="1010.2" cy="405.7" r="0.8"/><circle cx="1089.6" cy="449.8" r="0.8"/><circle cx="1021.0" cy="400.5" r="0.8"/><circle cx="1128.3" cy="425.7" r="0.8"/><circle cx="1052.8" cy="410.3" r="0.8"/><circle cx="1077.2" cy="441.0" r="0.8"/><circle cx="1059.2" cy="419.9" r="0.8"/><circle cx="1007.2" cy="445.6" r="0.8"/><circle cx="1004.3" cy="423.7" r="0.8"/><circle cx="1109.0" cy="404.8" r="0.8"/><circle cx="1095.1" cy="447.4" r="0.8"/><circle cx="1082.0" cy="439.0" r="0.8"/><circle cx="1013.9" cy="420.6" r="0.8"/><circle cx="1019.4" cy="441.9" r="0.8"/><circle cx="1038.3" cy="421.6" r="0.8"/><circle cx="1129.9" cy="442.3" r="0.8"/><circle cx="1126.9" cy="421.6" r="0.8"/><circle cx="1063.5" cy="435.9" r="0.8"/><circle cx="1062.3" cy="413.1" r="0.8"/><circle cx="1052.5" cy="405.6" r="0.8"/><circle cx="1049.0" cy="449.4" r="0.8"/><circle cx="1124.8" cy="430.6" r="0.8"/><circle cx="1064.9" cy="415.6" r="0.8"/></g>
<g opacity=".92">
<path d="M1005,437 L1031,446 L1058,431 L1052,428 L1031,440 Z" fill="#c81a1a"/>
<path d="M1010,394 L1036,398 L1036,444 L1010,439 Z" fill="#dc2e2e"/>
<path d="M1036,398 L1053,391 L1053,432 L1036,444 Z" fill="#b01818"/>
<path d="M1010,394 L1027,387 L1053,391 L1036,398 Z" fill="#d85050"/>
</g>
<path d="M1010,405 L1036,415 L1053,402" stroke="#e04848" stroke-width="1" fill="none" opacity=".7"/>
<rect x="1085" y="401" width="5" height="27" rx="2" fill="#0c0c0c"/>
<rect x="1085" y="426" width="5" height="5" fill="#c8e020"/>
<path d="M928,468 L941.5,461.5 Q950,470 953,480 L959,492 L959,508 L941,508 L936,488 L932.5,480 Z" fill="#101010"/>
<path d="M895,471.5 Q915,469 932,471.5 Q944,478 947,495 Q950,520 943,540 Q935,550 914,550 Q892,548 884,530 Q877,510 881,493 Q886,478 895,471.5 Z" fill="url(#tire)"/>
<path d="M888,488 Q902,484 918,487 M883,506 Q898,503 914,506 M884,524 Q900,522 915,525 M888,540 Q902,540 916,542 M905,472 Q899,510 906,549" stroke="#202020" stroke-width="1.2" fill="none" opacity=".7"/>
<ellipse cx="930" cy="514" rx="15" ry="24" fill="#080808"/>
<ellipse cx="930" cy="514" rx="10.5" ry="18.5" fill="none" stroke="#8a8a8a" stroke-width="1.3"/>
<ellipse cx="930" cy="514" rx="8" ry="15" fill="#050505"/>
<rect x="940" y="507" width="15" height="25" fill="url(#motor)"/>
<ellipse cx="958" cy="519.5" rx="8" ry="12.5" fill="#0b0b0b"/>
<path d="M1090,450 L1116,434 Q1122,431 1126,436 L1142,455 L1134,461 L1121,446 L1095,458 Q1088,456 1090,450 Z" fill="#121212"/>
<path d="M1093,494 L1174,437.5 L1178,436 L1186,438 L1196,440 L1196,455 L1114.5,509.5 L1096,502 Z" fill="#0d0d0d"/>
<circle cx="1100" cy="505" r=".9" fill="#999"/><circle cx="1111" cy="507" r=".9" fill="#999"/>
<path d="M1088,504 L1097,508 L1075,536 L1074,562 L1065,562 L1065,532 Z" fill="#0e0e0e"/>
<rect x="1055" y="532" width="13" height="24" fill="url(#motor)"/>
<ellipse cx="1055" cy="544" rx="3.5" ry="12.5" fill="#0e0e0e"/>
<path d="M1081,524.5 Q1088,513 1096,512 Q1115,513 1128,517 Q1136,520 1139,526.5 Q1143,535 1143,544 L1142,569 Q1139,584 1135,591 Q1126,599 1113.5,599 Q1097,597 1084,591 Q1074,584 1071.5,573.5 Q1069,560 1070,549 Q1072,535 1081,524.5 Z" fill="url(#tire)"/>
<path d="M1077,540 Q1094,536 1112,539 M1073,558 Q1090,555 1108,558 M1074,576 Q1091,574 1108,577 M1094,514 Q1088,555 1096,597" stroke="#202020" stroke-width="1.2" fill="none" opacity=".7"/>
<ellipse cx="1125" cy="560" rx="13.5" ry="27.5" fill="#060606"/>
<ellipse cx="1132" cy="561" rx="4.5" ry="9.5" fill="#9c9c9c"/>
<g fill="#c8c8c8"><circle cx="1134" cy="551" r="1.2"/><circle cx="1136" cy="556" r="1.2"/><circle cx="1135" cy="568" r="1.2"/><circle cx="1129" cy="571" r="1.2"/><circle cx="1128" cy="556" r="1.2"/></g>
</svg>
<div style="position:absolute;left:0px;top:79px;width:1920px;height:1px;background:#161214;"></div>
<div style="position:absolute;left:464px;top:80px;width:24px;height:1px;background:#757275;"></div>
<div style="position:absolute;left:1624px;top:80px;width:24px;height:1px;background:#757275;"></div>
<div style="position:absolute;left:464px;top:81px;width:24px;height:1px;background:#141012;"></div>
<div style="position:absolute;left:1624px;top:81px;width:24px;height:1px;background:#141012;"></div>
<div style="position:absolute;left:464px;top:81px;width:1px;height:906px;background:#161214;"></div>
<div style="position:absolute;left:1647px;top:81px;width:1px;height:906px;background:#161214;"></div>
<div style="position:absolute;left:487px;top:81px;width:1px;height:907px;background:#0e0a0c;"></div>
<div style="position:absolute;left:1624px;top:81px;width:1px;height:907px;background:#0e0a0c;"></div>
<div style="position:absolute;left:487px;top:987px;width:1138px;height:1px;background:#0e0a0c;"></div>
<div style="position:absolute;left:1648px;top:80px;width:272px;height:27px;background:#4d4a4b;box-sizing:border-box;border-top:1px solid #6c6a6b;"></div>
<div class="t" style="left:1676px;top:84.0px;color:#eff0f1;font-size:18.5px;letter-spacing:0.616px;">Views</div>
<div class="t" style="left:1651px;top:120.0px;color:#eff0f1;font-size:18.5px;letter-spacing:0.436px;">Type:</div>
<div style="position:absolute;left:1707px;top:115px;width:122px;height:28px;background:linear-gradient(#545253,#4a4849);box-sizing:border-box;border:1px solid #2c2a2b;border-radius:3px;"></div>
<div class="t" style="left:1712px;top:119.0px;color:#eff0f1;font-size:18.5px;letter-spacing:0.923px;">Orbit (rviz</div>
<div style="position:absolute;left:1839px;top:114px;width:78px;height:31px;background:linear-gradient(#5a5859,#504e4f);box-sizing:border-box;border:1px solid #6a6869;border-radius:3px;"></div>
<div class="t" style="left:1857px;top:120.0px;color:#eff0f1;font-size:18.5px;letter-spacing:0.851px;">Zero</div>
<div style="position:absolute;left:1649px;top:157px;width:271px;height:786px;background:#3d3b3e;box-sizing:border-box;border-top:1px solid #1e1c1d;"></div>
<div style="position:absolute;left:1784px;top:158px;width:1px;height:785px;background:#4a4849;"></div>
<div class="t" style="left:1682px;top:158.0px;color:#eff0f1;font-size:18.5px;font-weight:bold;transform:scaleX(1.1909);transform-origin:0 0;-webkit-text-stroke:.35px #eff0f1;">Current...</div>
<div class="t" style="left:1788px;top:158.0px;color:#eff0f1;font-size:18.5px;font-weight:bold;transform:scaleX(1.1959);transform-origin:0 0;-webkit-text-stroke:.35px #eff0f1;">Orbit (rviz)</div>
<div class="t" style="left:1711px;top:180.0px;color:#eff0f1;font-size:18.5px;letter-spacing:0.651px;">Near ...</div>
<div class="t" style="left:1788px;top:180.0px;color:#eff0f1;font-size:18.5px;letter-spacing:1.019px;">0,01</div>
<div class="t" style="left:1711px;top:202.0px;color:#eff0f1;font-size:18.5px;letter-spacing:0.933px;">Invert...</div>
<div style="position:absolute;left:1787px;top:202px;width:21px;height:20px;background:#363435;box-sizing:border-box;border:1px solid #1f1d1e;"></div>
<div class="t" style="left:1711px;top:224.0px;color:#eff0f1;font-size:18.5px;letter-spacing:0.513px;">Targe...</div>
<div class="t" style="left:1788px;top:224.0px;color:#eff0f1;font-size:18.5px;letter-spacing:0.596px;">&lt;Fixed Fra...</div>
<div class="t" style="left:1711px;top:246.0px;color:#eff0f1;font-size:18.5px;letter-spacing:0.740px;">Dista...</div>
<div class="t" style="left:1788px;top:246.0px;color:#eff0f1;font-size:18.5px;letter-spacing:1.082px;">1,89693</div>
<div class="t" style="left:1711px;top:268.0px;color:#eff0f1;font-size:18.5px;letter-spacing:0.415px;">Focal ...</div>
<div class="t" style="left:1788px;top:268.0px;color:#eff0f1;font-size:18.5px;letter-spacing:1.019px;">0,05</div>
<div class="t" style="left:1711px;top:290.0px;color:#eff0f1;font-size:18.5px;letter-spacing:0.415px;">Focal ...</div>
<div style="position:absolute;left:1787px;top:290px;width:21px;height:20px;background:#363435;box-sizing:border-box;border:1px solid #1f1d1e;"></div>
<div class="t" style="left:1711px;top:312.0px;color:#eff0f1;font-size:18.5px;letter-spacing:-0.117px;">Yaw</div>
<div class="t" style="left:1788px;top:312.0px;color:#eff0f1;font-size:18.5px;letter-spacing:1.092px;">0,520397</div>
<div class="t" style="left:1711px;top:334.0px;color:#eff0f1;font-size:18.5px;letter-spacing:0.540px;">Pitch</div>
<div class="t" style="left:1788px;top:334.0px;color:#eff0f1;font-size:18.5px;letter-spacing:1.092px;">0,415398</div>
<div class="t" style="left:1711px;top:356.0px;color:#eff0f1;font-size:18.5px;letter-spacing:0.415px;">Focal ...</div>
<div class="t" style="left:1788px;top:356.0px;color:#eff0f1;font-size:18.5px;letter-spacing:0.929px;">0; 0; 0</div>
<div style="position:absolute;left:1651px;top:953px;width:81px;height:31px;background:linear-gradient(#5a5859,#504e4f);box-sizing:border-box;border:1px solid #6a6869;border-radius:3px;"></div>
<div class="t" style="left:1669px;top:959.0px;color:#eff0f1;font-size:18.5px;letter-spacing:0.505px;">Save</div>
<div style="position:absolute;left:1742px;top:953px;width:82px;height:31px;background:linear-gradient(#5a5859,#504e4f);box-sizing:border-box;border:1px solid #6a6869;border-radius:3px;"></div>
<div class="t" style="left:1746px;top:959.0px;color:#eff0f1;font-size:18.5px;letter-spacing:0.694px;">Remove</div>
<div style="position:absolute;left:1834px;top:953px;width:83px;height:31px;background:linear-gradient(#5a5859,#504e4f);box-sizing:border-box;border:1px solid #6a6869;border-radius:3px;"></div>
<div class="t" style="left:1839px;top:959.0px;color:#eff0f1;font-size:18.5px;letter-spacing:0.649px;">Rename</div>
<div class="t" style="left:1864px;top:991.0px;color:#eff0f1;font-size:18.5px;letter-spacing:0.896px;">31 fps</div>
<svg style="left:0;top:0" width="1920" height="1021" viewBox="0 0 1920 1021">
<defs>
<linearGradient id="mon" x1="0" y1="0" x2="1" y2="0"><stop offset="0" stop-color="#c46a78"/><stop offset=".3" stop-color="#c77d7d"/><stop offset=".45" stop-color="#7cc47a"/><stop offset=".6" stop-color="#86c690"/><stop offset=".8" stop-color="#9090dd"/><stop offset="1" stop-color="#a8a8e8"/></linearGradient>
<radialGradient id="redball" cx=".4" cy=".35" r=".7"><stop offset="0" stop-color="#ff7a7a"/><stop offset=".6" stop-color="#e02020"/><stop offset="1" stop-color="#a00010"/></radialGradient>
<linearGradient id="pin" x1="0" y1="0" x2="0" y2="1"><stop offset="0" stop-color="#f06048"/><stop offset=".6" stop-color="#c85020"/><stop offset="1" stop-color="#5a4a30"/></linearGradient>
</defs>
<path d="M25.6,46.6 Q25.6,45.4 26.8,45.4 Q28,45.4 28,46.6 V51.6 H36.6 Q37.6,51.6 37.6,52.6 V60.2 Q37.6,62 35.8,62 H25 Q23,62 23,60 V53.4 Q23,52.2 24.2,52.2 H25.6 Z" fill="#ffffff" stroke="#000" stroke-width="1.1"/>
<path d="M28.5,51.8 v3 M31.5,51.8 v3 M34.5,51.8 v3" stroke="#000" stroke-width=".9"/>
<g fill="none" stroke="#000" stroke-width="3.2" stroke-linecap="round"><path d="M151,49 v11"/><path d="M144.5,52 q6.5,4.5 13,0"/></g>
<g fill="none" stroke="#f0f0f0" stroke-width="1.6" stroke-linecap="round"><path d="M151,49 v11"/><path d="M144.5,52 q6.5,4.5 13,0"/></g>
<g fill="#f4f4f4" stroke="#000" stroke-width=".6"><path d="M147.5,50.5 l3.5,-3.5 l3.5,3.5 z"/><path d="M147.5,58.5 l3.5,3.5 l3.5,-3.5 z"/><circle cx="144" cy="52.2" r="1.9"/><circle cx="158" cy="52.2" r="1.9"/></g>
<rect x="313.5" y="48.5" width="15" height="12" fill="#000"/>
<rect x="312" y="47" width="15" height="12.5" fill="#d8d592" stroke="#ecebc0" stroke-width="1.2" stroke-dasharray="1.5 1.5"/>
<g stroke="#f2f2f2" stroke-width="1.4" fill="none"><circle cx="428.5" cy="54.5" r="4.6"/><path d="M420.5,54.5 h16 M428.5,46.5 v16"/></g>
<rect x="592" y="51" width="16" height="6" fill="#ece6b8" stroke="#5e5a48" stroke-width=".8"/>
<path d="M594.5,51 v2.2 M597,51 v2.2 M599.5,51 v2.2 M602,51 v2.2 M604.5,51 v2.2" stroke="#6a6650" stroke-width=".9"/>
<path d="M719,59.5 L727,52" stroke="#003300" stroke-width="3.4" stroke-linecap="round"/>
<path d="M719,59.5 L727,52" stroke="#2ee84c" stroke-width="2" stroke-linecap="round"/>
<path d="M733.5,47 L724.5,51 L728.5,55.5 Z" fill="#22f040" stroke="#003300" stroke-width=".8"/>
<path d="M918,59.5 L926,52" stroke="#003300" stroke-width="3.4" stroke-linecap="round"/>
<path d="M918,59.5 L926,52" stroke="#2ee84c" stroke-width="2" stroke-linecap="round"/>
<path d="M932.5,47 L923.5,51 L927.5,55.5 Z" fill="#22f040" stroke="#003300" stroke-width=".8"/>
<path d="M1090,61.5 Q1085.5,55 1085.3,51.5 A4.8,4.8 0 1 1 1094.7,51.5 Q1094.5,55 1090,61.5 Z" fill="url(#pin)" stroke="#2a1010" stroke-width=".8"/>
<circle cx="1090" cy="50.8" r="1.6" fill="#1a0000"/>
<path d="M1244.5,53.8 h11 M1250,48 v11.5" stroke="#2b5ea8" stroke-width="3.6"/>
<path d="M1244.5,53.8 h11 M1250,48 v11.5" stroke="#a8d4fa" stroke-width="2"/>
<path d="M1312.5,53.9 h11" stroke="#2b5ea8" stroke-width="3.6"/>
<path d="M1312.5,53.9 h11" stroke="#a8d4fa" stroke-width="2"/>
<path d="M1326,64 h12 l-6,6 z" fill="#bdbdbd"/>
<rect x="5" y="87.5" width="14.5" height="11" rx="1" fill="url(#mon)" stroke="#000" stroke-width="1.3"/>
<path d="M11,99 h3 l1.5,2 h-6 z" fill="#000"/><rect x="7.8" y="101" width="9" height="1.8" rx=".9" fill="#e8e8e8" stroke="#000" stroke-width=".6"/>
<rect x="445.2" y="86.0" width="15.6" height="15" rx="2" fill="#4e4c4d" stroke="#777" stroke-width="1"/>
<path d="M445.2,101.1 h15.6" stroke="#2c2c2c" stroke-width="1"/>
<circle cx="453" cy="93.3" r="5" fill="url(#redball)"/>
<path d="M451,91.3 l4,4 M455,91.3 l-4,4" stroke="#fff" stroke-width="1.6"/>
<rect x="445.2" y="789.0" width="15.6" height="15" rx="2" fill="#4e4c4d" stroke="#777" stroke-width="1"/>
<path d="M445.2,804.0999999999999 h15.6" stroke="#2c2c2c" stroke-width="1"/>
<circle cx="453" cy="796.3" r="5" fill="url(#redball)"/>
<path d="M451,794.3 l4,4 M455,794.3 l-4,4" stroke="#fff" stroke-width="1.6"/>
<rect x="1901.2" y="86.0" width="15.6" height="15" rx="2" fill="#4e4c4d" stroke="#777" stroke-width="1"/>
<path d="M1901.2,101.1 h15.6" stroke="#2c2c2c" stroke-width="1"/>
<circle cx="1909" cy="93.3" r="5" fill="url(#redball)"/>
<path d="M1907,91.3 l4,4 M1911,91.3 l-4,4" stroke="#fff" stroke-width="1.6"/>
<g transform="translate(4,789)"><path d="M0.5,1 h13 l2,-1 v14 h-15 z" fill="#d8d8d8" stroke="#9a9a9a" stroke-width=".6"/><circle cx="3.8" cy="4.5" r="1.7" fill="none" stroke="#000" stroke-width="1.1"/><rect x="2.8" y="8.3" width="1.8" height="1.4" fill="#333"/><rect x="7.3" y="5" width="8" height="8" fill="#d8ecff"/><rect x="8.5" y="6" width="6" height="6" fill="#2a5a90"/></g>
<path d="M14,145 L17,149 L25,138" fill="none" stroke="#226e2b" stroke-width="2.1" stroke-linecap="round" stroke-linejoin="round"/>
<path d="M43,169 L46,173 L54,162" fill="none" stroke="#226e2b" stroke-width="2.1" stroke-linecap="round" stroke-linejoin="round"/>
<path d="M43,289 L46,293 L54,282" fill="none" stroke="#226e2b" stroke-width="2.1" stroke-linecap="round" stroke-linejoin="round"/>
<path d="M43,553 L46,557 L54,546" fill="none" stroke="#226e2b" stroke-width="2.1" stroke-linecap="round" stroke-linejoin="round"/>
<path d="M20,282 L26.5,288 L20,294 Z" fill="#c3c3c3"/>
<path d="M20,306 L26.5,312 L20,318 Z" fill="#c3c3c3"/>
<path d="M20,546 L26.5,552 L20,558 Z" fill="#c3c3c3"/>
<path d="M20,570 L26.5,576 L20,582 Z" fill="#c3c3c3"/>
<path d="M20,594 L26.5,600 L20,606 Z" fill="#a9c8df"/>
<path d="M20,186 L28,191.5 L20,197.3 L12,191.5 Z" fill="none" stroke="#f0f0f0" stroke-width="1.5"/>
<g fill="#f0f0f0"><path d="M20,188.3 l1.6,1.3 l-1.6,1.3 l-1.6,-1.3z"/><path d="M20,192.1 l1.6,1.3 l-1.6,1.3 l-1.6,-1.3z"/><path d="M17.2,190.2 l1.6,1.3 l-1.6,1.3 l-1.6,-1.3z"/><path d="M22.8,190.2 l1.6,1.3 l-1.6,1.3 l-1.6,-1.3z"/></g>
<g><rect x="15.5" y="209.5" width="5.5" height="4" fill="#e8e8f0"/><rect x="16" y="210" width="5" height="1.2" fill="#202050"/><path d="M12.5,224 v-8 q0,-3 3,-3.5 h5.5 v3 h1 v8.5 z" fill="#f4f4f4"/><rect x="13.5" y="216" width="2" height="7" fill="#000"/><rect x="17" y="215.5" width="2" height="7" fill="#555"/><rect x="21" y="217" width="2" height="6.5" fill="#000"/><path d="M24,219 l2.5,4 h-2z" fill="#888"/></g>
<rect x="12.8" y="233" width="14" height="14" fill="#3d5a80" stroke="#f0f0f0" stroke-width="1.6"/>
<path d="M14,243 q4,-3 7,-1 q3,1 5,-1 v5 h-12z" fill="#7a96b8"/><circle cx="17.5" cy="237" r="1.6" fill="#d8e8b0"/>
<path d="M12,267 q2,-3 4,-2.5 q2,0.5 3,-2 q1,3 1.5,4.5 q2,-2 3.5,-0.5 q1.5,2 4,1" fill="none" stroke="#ff0a0a" stroke-width="2.2" stroke-linecap="round"/>
<g transform="translate(12,520)"><path d="M0.5,1 h13 l2,-1 v14 h-15 z" fill="#d8d8d8" stroke="#9a9a9a" stroke-width=".6"/><circle cx="3.8" cy="4.5" r="1.7" fill="none" stroke="#000" stroke-width="1.1"/><rect x="2.8" y="8.3" width="1.8" height="1.4" fill="#333"/><rect x="7.3" y="5" width="8" height="8" fill="#d8ecff"/><rect x="8.5" y="6" width="6" height="6" fill="#2a5a90"/></g>
<ellipse cx="49" cy="576" rx="7.8" ry="4" fill="#f4f6f4"/><circle cx="49" cy="576" r="3.2" fill="#6a6fb0"/><circle cx="49" cy="576" r="1.1" fill="#000"/>
<path d="M218.6,192 L223.3,199 L230,186" fill="none" stroke="#2d6bb5" stroke-width="2.6" stroke-linecap="round" stroke-linejoin="round"/>
<path d="M218.6,216 L223.3,223 L230,210" fill="none" stroke="#2d6bb5" stroke-width="2.6" stroke-linecap="round" stroke-linejoin="round"/>
<path d="M218.6,264 L223.3,271 L230,258" fill="none" stroke="#2d6bb5" stroke-width="2.6" stroke-linecap="round" stroke-linejoin="round"/>
<path d="M218.6,528 L223.3,535 L230,522" fill="none" stroke="#2d6bb5" stroke-width="2.6" stroke-linecap="round" stroke-linejoin="round"/>
<path d="M218.6,336 L223.3,343 L230,330" fill="none" stroke="#d6d6d6" stroke-width="2.6" stroke-linecap="round" stroke-linejoin="round"/>
<path d="M218.6,576 L223.3,583 L230,570" fill="none" stroke="#d6d6d6" stroke-width="2.6" stroke-linecap="round" stroke-linejoin="round"/>
<path d="M1791.6,300 L1796.3,307 L1803,294" fill="none" stroke="#d6d6d6" stroke-width="2.6" stroke-linecap="round" stroke-linejoin="round"/>
<rect x="7.25" y="581.75" width="426.5" height="30.5" fill="none" stroke="#ff1c48" stroke-width="4.5"/>
<path d="M447,121 L452.5,115 L458,121 Z" fill="#d0d0d0"/>
<path d="M447,711 L452.5,717 L458,711 Z" fill="#d0d0d0"/>
<rect x="468" y="527" width="2" height="2" fill="#7a7a7a"/>
<rect x="1644" y="527" width="2" height="2" fill="#7a7a7a"/>
<rect x="468" y="530" width="2" height="2" fill="#7a7a7a"/>
<rect x="1644" y="530" width="2" height="2" fill="#7a7a7a"/>
<rect x="468" y="533" width="2" height="2" fill="#7a7a7a"/>
<rect x="1644" y="533" width="2" height="2" fill="#7a7a7a"/>
<rect x="468" y="536" width="2" height="2" fill="#7a7a7a"/>
<rect x="1644" y="536" width="2" height="2" fill="#7a7a7a"/>
<rect x="468" y="539" width="2" height="2" fill="#7a7a7a"/>
<rect x="1644" y="539" width="2" height="2" fill="#7a7a7a"/>
<rect x="468" y="542" width="2" height="2" fill="#7a7a7a"/>
<rect x="1644" y="542" width="2" height="2" fill="#7a7a7a"/>
<path d="M483,528 L477,534 L483,540 Z" fill="#bdbdbd"/>
<path d="M1629,528 L1635,534 L1629,540 Z" fill="#bdbdbd"/>
<rect x="226" y="727" width="2" height="2" fill="#7a7a7a"/>
<rect x="226" y="778" width="2" height="2" fill="#7a7a7a"/>
<rect x="229" y="727" width="2" height="2" fill="#7a7a7a"/>
<rect x="229" y="778" width="2" height="2" fill="#7a7a7a"/>
<rect x="232" y="727" width="2" height="2" fill="#7a7a7a"/>
<rect x="232" y="778" width="2" height="2" fill="#7a7a7a"/>
<rect x="235" y="727" width="2" height="2" fill="#7a7a7a"/>
<rect x="235" y="778" width="2" height="2" fill="#7a7a7a"/>
<rect x="238" y="727" width="2" height="2" fill="#7a7a7a"/>
<rect x="238" y="778" width="2" height="2" fill="#7a7a7a"/>
<rect x="241" y="727" width="2" height="2" fill="#7a7a7a"/>
<rect x="241" y="778" width="2" height="2" fill="#7a7a7a"/>
<path d="M1807,126 h12 l-6,6 z" fill="#cfcfcf"/>
<path d="M1658,164.5 h11.5 l-5.75,6.5 z" fill="#c3c3c3"/>
<path d="M1690,360 L1696,366 L1690,372 Z" fill="#c3c3c3"/>
</svg>
</body></html>
